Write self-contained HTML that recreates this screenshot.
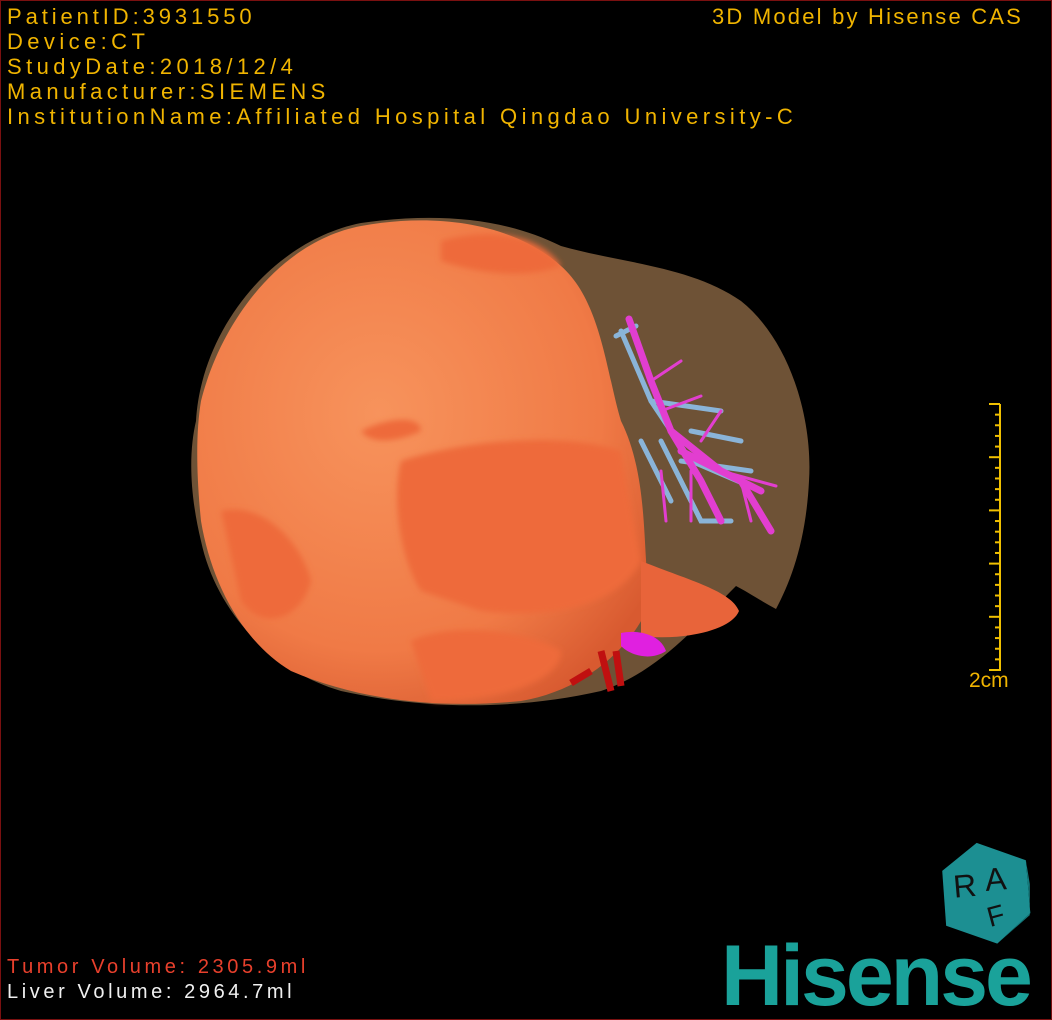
<!DOCTYPE html>
<html><head><meta charset="utf-8"><style>
html,body{margin:0;padding:0;background:#000;}
#c{position:relative;width:1050px;height:1018px;border:1px solid #7a1010;background:#000;overflow:hidden;}
.t{position:absolute;left:6px;color:#f0b400;font-size:22px;line-height:25px;white-space:pre;font-family:"Liberation Sans","Noto Sans CJK SC",sans-serif;letter-spacing:4.4px;}
</style></head><body><div id="c">
<div class="t" style="top:3px"><span style="letter-spacing:3.9px">PatientID:3931550</span><br>Device:CT<br>StudyDate:2018/12/4<br>Manufacturer:SIEMENS<br>InstitutionName:Affiliated Hospital Qingdao University-C</div>
<div class="t" style="left:711px;top:3px;letter-spacing:2.2px">3D Model by Hisense CAS</div>
<svg width="1050" height="1018" style="position:absolute;left:0;top:0">
<defs><filter id="b"><feGaussianBlur stdDeviation="3"/></filter>
<radialGradient id="og" cx="0.4" cy="0.4" r="0.7"><stop offset="0" stop-color="#f7935c"/><stop offset="0.7" stop-color="#f07a46"/><stop offset="1" stop-color="#d85a30"/></radialGradient></defs>
<path d="M195,420 C200,330 270,240 360,222 C430,212 500,215 560,245 C620,262 690,265 740,300 C790,340 812,420 808,480 C805,540 790,580 775,608 C760,600 745,590 735,585 C700,620 660,670 600,690 C520,708 430,710 340,690 C270,670 215,610 200,540 C188,490 188,450 195,420 Z" fill="#6e5236"/>
<path d="M200,400 C220,320 280,240 360,225 C430,212 510,220 560,265 C600,300 605,370 620,420 C650,480 640,560 650,600 C630,650 580,690 520,700 C440,708 360,700 290,670 C240,640 210,580 200,520 C195,470 195,430 200,400 Z" fill="url(#og)"/>
<g fill="#ee6a3a" filter="url(#b)">
<path d="M400,460 C460,440 560,430 620,450 L640,560 C620,600 560,620 480,610 L420,590 C400,560 390,500 400,460 Z"/>
<path d="M410,640 C450,620 530,630 560,650 C560,680 500,700 430,700 Z"/>
<path d="M220,510 C260,500 300,540 310,580 C300,620 260,630 240,600 Z"/>
<path d="M360,430 C390,415 420,415 420,430 C400,440 370,445 360,430 Z"/>
<path d="M440,240 C490,225 540,235 560,265 C520,280 470,270 440,260 Z"/>
</g>
<path d="M640,560 C690,580 730,590 738,610 C730,630 680,640 640,635 Z" fill="#e8643a"/>
<g fill="none" stroke-linecap="round">
<g stroke="#8ab4d8" stroke-width="5">
<path d="M620,330 L650,400 L690,460 L760,490"/><path d="M650,400 L720,410"/><path d="M660,440 L700,520 L730,520"/><path d="M680,460 L750,470"/><path d="M640,440 L670,500"/><path d="M690,430 L740,440"/><path d="M615,335 L635,325"/></g>
<g stroke="#e23ed0" stroke-width="7">
<path d="M628,318 L650,380 L670,430 L720,470 L760,490"/><path d="M670,430 L700,480 L720,520"/><path d="M680,450 L740,480 L770,530"/></g>
<g stroke="#e23ed0" stroke-width="3">
<path d="M650,380 L680,360"/><path d="M660,410 L700,395"/><path d="M700,440 L720,410"/><path d="M690,470 L690,520"/><path d="M740,480 L750,520"/><path d="M660,470 L665,520"/><path d="M720,470 L775,485"/></g>
</g>
<path d="M620,632 C640,628 660,635 665,650 C650,660 630,655 620,645 Z" fill="#e020e0"/>
<path d="M600,650 L610,690 M615,650 L620,685 M590,670 L570,682" stroke="#c01010" stroke-width="7" fill="none"/>
<line x1="999" y1="403" x2="999" y2="670" stroke="#f0c000" stroke-width="2"/>
<g id="ticks" stroke="#f0c000" stroke-width="2"></g>
<g transform="translate(985,892) rotate(15)">
<polygon points="-48,-10 -22,-46 30,-42 48,8 24,46 -30,42" fill="#1c8f92"/>
<polygon points="24,46 48,8 30,-42 40,-20 48,10" fill="#147a7c"/>
<text x="-32" y="2" font-family="Liberation Sans" font-size="32" fill="#111" transform="rotate(-20)">R</text>
<text x="0" y="-2" font-family="Liberation Sans" font-size="32" fill="#111" transform="rotate(-20)">A</text>
<text x="-5" y="34" font-family="Liberation Sans" font-size="28" fill="#111" transform="rotate(-30)">F</text>
</g>
</svg>
<div style="position:absolute;left:968px;top:668px;color:#f0b400;font-family:'Liberation Sans',sans-serif;font-size:21px;">2cm</div>
<div class="t" style="top:954px;color:#e8402c;font-size:20px;letter-spacing:3.6px">Tumor Volume: 2305.9ml</div>
<div class="t" style="top:979px;color:#f0f0f0;font-size:20px;letter-spacing:3.6px">Liver Volume: 2964.7ml</div>
<div style="position:absolute;left:720px;top:925px;color:#1aa29a;font-family:'Liberation Sans',sans-serif;font-weight:bold;font-size:86px;letter-spacing:-3px;line-height:100px;">Hisense</div>
</div>
<script>
var g=document.getElementById('ticks'),s='';
for(var i=0;i<=25;i++){var y=403+i*266/25;var x=(i%5==0)?988:994;s+='<line x1="'+x+'" y1="'+y+'" x2="999" y2="'+y+'"/>';}
g.innerHTML=s;
</script>
</body></html>
